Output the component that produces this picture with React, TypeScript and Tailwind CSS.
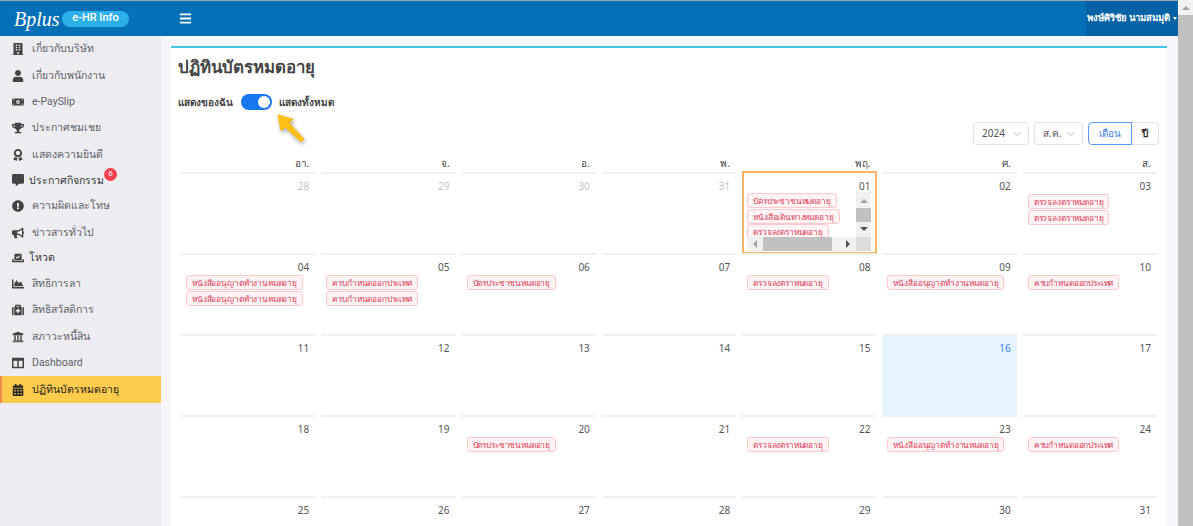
import { FaAward, FaBuilding, FaBullhorn, FaCalendarAlt, FaChartArea, FaColumns, FaCommentAlt, FaExclamationCircle, FaMedkit, FaMoneyBillAlt, FaTrophy, FaUniversity, FaUser, FaVoteYea, FaBars } from 'react-icons/fa'
import { LuChevronDown } from 'react-icons/lu'

const menu = [
  { icon: FaBuilding, label: 'เกี่ยวกับบริษัท' },
  { icon: FaUser, label: 'เกี่ยวกับพนักงาน' },
  { icon: FaMoneyBillAlt, label: 'e-PaySlip' },
  { icon: FaTrophy, label: 'ประกาศชมเชย' },
  { icon: FaAward, label: 'แสดงความยินดี' },
  { icon: FaCommentAlt, label: 'ประกาศกิจกรรม', badge: 6, tight: true },
  { icon: FaExclamationCircle, label: 'ความผิดและโทษ' },
  { icon: FaBullhorn, label: 'ข่าวสารทั่วไป' },
  { icon: FaVoteYea, label: 'โหวต', tight: true },
  { icon: FaChartArea, label: 'สิทธิการลา' },
  { icon: FaMedkit, label: 'สิทธิสวัสดิการ' },
  { icon: FaUniversity, label: 'สภาวะหนี้สิน' },
  { icon: FaColumns, label: 'Dashboard' },
]

const ID = 'บัตรประชาชนหมดอายุ'
const WORK = 'หนังสืออนุญาตทำงานหมดอายุ'
const STAMP = 'ตรวจลงตราหมดอายุ'
const LEAVE = 'ครบกำหนดออกประเทศ'

const days = ['อา.', 'จ.', 'อ.', 'พ.', 'พฤ.', 'ศ.', 'ส.']

const cells: { d: string; muted?: boolean; today?: boolean; events?: string[] }[] = [
  { d: '28', muted: true }, { d: '29', muted: true }, { d: '30', muted: true }, { d: '31', muted: true }, { d: '01' }, { d: '02' }, { d: '03', events: [STAMP, STAMP] },
  { d: '04', events: [WORK, WORK] }, { d: '05', events: [LEAVE, LEAVE] }, { d: '06', events: [ID] }, { d: '07' }, { d: '08', events: [STAMP] }, { d: '09', events: [WORK] }, { d: '10', events: [LEAVE] },
  { d: '11' }, { d: '12' }, { d: '13' }, { d: '14' }, { d: '15' }, { d: '16', today: true }, { d: '17' },
  { d: '18' }, { d: '19' }, { d: '20', events: [ID] }, { d: '21' }, { d: '22', events: [STAMP] }, { d: '23', events: [WORK] }, { d: '24', events: [LEAVE] },
  { d: '25' }, { d: '26' }, { d: '27' }, { d: '28' }, { d: '29' }, { d: '30' }, { d: '31' },
]

function Tag({ text }: { text: string }) {
  return (
    <span className="inline-block h-[15px] shrink-0 whitespace-nowrap rounded-[3px] border border-[#ffc9c9] bg-[#fff3f3] px-[5px] text-[8.3px] leading-[13px] tracking-[-0.15px] text-[#d9415a]">
      {text}
    </span>
  )
}

function ScrollCell() {
  return (
    <div className="-mt-[1px] -mb-[1px] mr-[2px] ml-[3px] flex h-[83px] flex-col border-[2px] border-[#fbb463] bg-white pr-[4px] pb-[1px] pl-[3px]">
      <div className="h-[19px] shrink-0 pt-[6px] pr-px text-right text-[10px] leading-[15px] text-[#555]">01</div>
      <div className="flex min-h-0 flex-1">
        <div className="flex min-w-0 flex-1 flex-col">
          <div className="flex min-h-0 flex-1 flex-col items-start gap-[0.5px] overflow-hidden pt-[1px]">
            <Tag text={ID} />
            <Tag text={'หนังสือเดินทางหมดอายุ'} />
            <Tag text={STAMP} />
          </div>
          <div className="flex h-[14px] shrink-0 items-center bg-[#f1f1f1]">
            <span className="ml-[6px] h-0 w-0 border-y-[4px] border-r-[4px] border-y-transparent border-r-[#a3a3a3]" />
            <span className="ml-[6px] h-full w-[69px] bg-[#c1c1c1]" />
            <span className="ml-[14px] h-0 w-0 border-y-[4px] border-l-[4px] border-y-transparent border-l-[#505050]" />
          </div>
        </div>
        <div className="flex w-[15px] shrink-0 flex-col items-center bg-[#f1f1f1]">
          <span className="mt-[7px] h-0 w-0 border-x-[4px] border-b-[4px] border-x-transparent border-b-[#a3a3a3]" />
          <span className="mt-[5px] h-[14px] w-full bg-[#c1c1c1]" />
          <span className="mt-[5px] h-0 w-0 border-x-[4px] border-t-[4px] border-x-transparent border-t-[#505050]" />
          <span className="mt-auto h-[14px] w-full bg-[#dcdcdc]" />
        </div>
      </div>
    </div>
  )
}

export default function App() {
  return (
    <div className="flex h-screen w-full overflow-hidden bg-[#f5f5fa] font-['Noto_Sans','Open_Sans',sans-serif]">
      <div className="flex min-w-0 flex-1 flex-col">
        <div className="h-px shrink-0 bg-[#9aa5a8]" />
        <header className="flex h-[35px] shrink-0 items-center bg-[#0570b7] text-white">
          <div className="flex w-[161px] shrink-0 items-center pl-[14px]">
            <span className="w-[47px] font-['Liberation_Serif',serif] text-[20px] leading-none italic">Bplus</span>
            <span className="ml-[1px] flex h-[16px] w-[67px] items-center justify-center rounded-full bg-[#2bb0ea] font-['Roboto',sans-serif] text-[11px] font-medium">e-HR Info</span>
          </div>
          <FaBars className="ml-[18px] h-[13px] w-[13px]" />
          <div className="ml-auto flex h-full items-center gap-[3px] bg-[#0563a5] pl-[1px] pr-[1px] text-[9.5px] font-semibold">
            พงษ์ศิริชัย นามสมมุติ
            <span className="h-0 w-0 border-x-[2.5px] border-t-[3px] border-x-transparent border-t-white" />
          </div>
        </header>

        <div className="flex min-h-0 flex-1">
          <aside className="w-[161px] shrink-0 bg-[#ececf1]">
            {menu.map(item => (
              <div key={item.label} className={`flex items-center pl-[12px] font-['Roboto','Noto_Sans',sans-serif] text-[10.5px] text-[#5f6368] ${item.tight ? 'h-[25px]' : 'h-[26.4px]'}`}>
                <item.icon className="h-[12px] w-[12px] shrink-0 text-[#444]" />
                <span className={`relative whitespace-nowrap ${item.tight ? 'ml-[5px] text-[#333]' : 'ml-[8px]'}`}>
                  {item.label}
                  {item.badge && (
                    <span className="absolute -top-[5px] -right-[13px] flex h-[13px] w-[13px] items-center justify-center rounded-full bg-[#f5424d] text-[8px] text-white">
                      {item.badge}
                    </span>
                  )}
                </span>
              </div>
            ))}
            <div className="flex h-[27px] items-center border-l-2 border-[#f08a4b] bg-[#ffcb4c] pl-[10px] font-['Roboto','Noto_Sans',sans-serif] text-[10.5px] text-[#222]">
              <FaCalendarAlt className="h-[12px] w-[12px] shrink-0" />
              <span className="ml-[8px]">ปฏิทินบัตรหมดอายุ</span>
            </div>
          </aside>

          <main className="min-w-0 flex-1 overflow-hidden pt-[10px] pr-[11px] pl-[10px]">
            <div className="border-t-[2px] border-[#48c3e3] bg-white px-[7px]">
              <h1 className="pt-[7px] text-[16.8px] leading-[24px] font-semibold text-[#444]">ปฏิทินบัตรหมดอายุ</h1>
              <div className="mt-[14px] flex h-[18px] items-center text-[10px] font-semibold text-[#444]">
                <span>แสดงของฉัน</span>
                <div className="relative ml-[8px] h-[16px] w-[31px] rounded-full bg-[#1677ee]">
                  <span className="absolute top-[2px] right-[2px] h-[12px] w-[12px] rounded-full bg-white" />
                </div>
                <span className="ml-[7px]">แสดงทั้งหมด</span>
              </div>
              <div className="mt-[11px] flex h-[23px] justify-end gap-[5px] pr-px text-[10px] text-[#555]">
                <div className="flex w-[56px] items-center justify-between rounded-[4px] border border-[#e2e2e2] pl-[8px] pr-[5px]">
                  2024 <LuChevronDown className="h-[12px] w-[12px] text-[#bbb]" />
                </div>
                <div className="flex w-[49px] items-center justify-between rounded-[4px] border border-[#e2e2e2] pl-[8px] pr-[5px]">
                  ส.ค. <LuChevronDown className="h-[12px] w-[12px] text-[#bbb]" />
                </div>
                <div className="flex">
                  <div className="flex w-[44px] items-center justify-center rounded-l-[4px] border border-[#5b9bf5] text-[#3b82f6]">เดือน</div>
                  <div className="flex w-[27px] items-center justify-center rounded-r-[4px] border border-l-0 border-[#e2e2e2] font-semibold text-[#333]">ปี</div>
                </div>
              </div>

              <div className="mt-[10px] grid grid-cols-7">
                {days.map(d => (
                  <div key={d} className="h-[17px] pr-[9px] text-right text-[10px] leading-[17px] text-[#444]">{d}</div>
                ))}
                {cells.map((c, i) =>
                  c.d === '01' ? (
                    <ScrollCell key={i} />
                  ) : (
                    <div key={i} className="mx-[3px] h-[81px] border-t-2 border-[#f0f0f0]">
                      <div className={`h-full pt-[5px] ${c.today ? 'bg-[#e6f4ff]' : ''}`}>
                        <div className={`pr-[6px] text-right text-[10px] leading-[15px] ${c.muted ? 'text-[#c4c4c4]' : c.today ? 'text-[#3b82f6]' : 'text-[#555]'}`}>{c.d}</div>
                        <div className="flex flex-col items-start gap-px pl-[5px]">
                          {c.events?.map((e, j) => <Tag key={j} text={e} />)}
                        </div>
                      </div>
                    </div>
                  ),
                )}
              </div>
            </div>
          </main>
        </div>
      </div>

      <div className="flex w-[15px] shrink-0 flex-col items-center bg-[#f1f1f1]">
        <span className="mt-[6px] h-0 w-0 border-x-[4px] border-b-[4px] border-x-transparent border-b-[#a3a3a3]" />
        <span className="mt-[5px] w-full flex-1 bg-[#c1c1c1]" />
      </div>

      <svg className="absolute top-[113px] left-[275px] drop-shadow-[1px_2px_2px_rgba(0,0,0,0.35)]" width="32" height="32" viewBox="0 0 32 32">
        <path d="M3 2 L18 6 L14 10 L29 26 L26 29 L10 14 L6 18 Z" fill="#fbbf17" stroke="#fbbf17" strokeLinejoin="round" />
      </svg>
    </div>
  )
}
